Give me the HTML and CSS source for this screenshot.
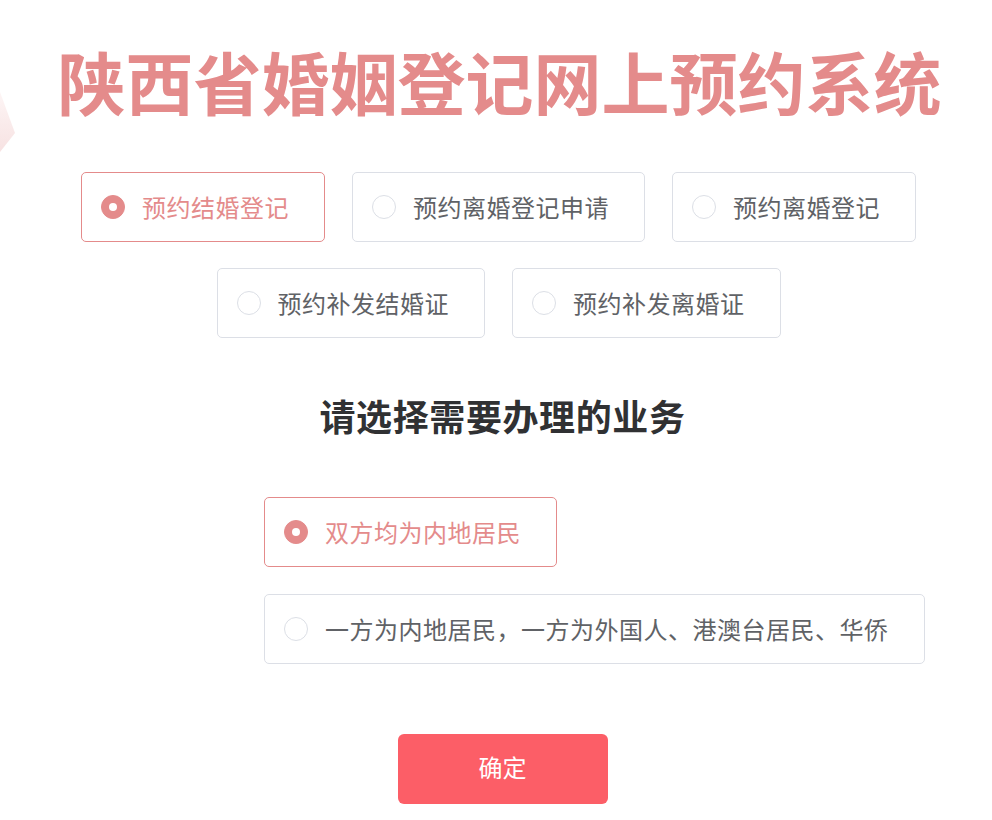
FILE: index.html
```html
<!DOCTYPE html>
<html lang="zh-CN">
<head>
<meta charset="utf-8">
<title>陕西省婚姻登记网上预约系统</title>
<link rel="stylesheet" href="styles.css">
</head>
<body>
<svg class="deco" width="40" height="200" viewBox="0 0 40 200" aria-hidden="true">
  <defs>
    <linearGradient id="dg" x1="0" y1="0" x2="0" y2="1">
      <stop offset="0" stop-color="#fdf5f5"/>
      <stop offset="1" stop-color="#f7e2e2"/>
    </linearGradient>
  </defs>
  <polygon points="0,92 15,133 0,152" fill="url(#dg)"/>
</svg>
<main class="page">
  <h1 class="title">陕西省婚姻登记网上预约系统</h1>

  <div class="options">
    <div class="row">
      <label class="opt is-checked"><span class="radio"></span><span class="txt">预约结婚登记</span></label>
      <label class="opt"><span class="radio"></span><span class="txt">预约离婚登记申请</span></label>
      <label class="opt"><span class="radio"></span><span class="txt">预约离婚登记</span></label>
    </div>
    <div class="row">
      <label class="opt"><span class="radio"></span><span class="txt">预约补发结婚证</span></label>
      <label class="opt"><span class="radio"></span><span class="txt">预约补发离婚证</span></label>
    </div>
  </div>

  <h2 class="subtitle">请选择需要办理的业务</h2>

  <div class="biz">
    <label class="opt is-checked"><span class="radio"></span><span class="txt">双方均为内地居民</span></label>
    <label class="opt"><span class="radio"></span><span class="txt">一方为内地居民，一方为外国人、港澳台居民、华侨</span></label>
  </div>

  <div class="actions">
    <button class="btn" type="button">确定</button>
  </div>
</main>
</body>
</html>
```
FILE: styles.css
```css
* { box-sizing: border-box; }
html, body { margin: 0; padding: 0; background: #fff; }
body {
  font-family: "Noto Sans CJK SC", "Noto Sans", sans-serif;
  color: #606266;
  position: relative;
  width: 992px;
  height: 820px;
  overflow: hidden;
}
.deco { position: absolute; left: 0; top: 0; }
.page {
  display: flex;
  flex-direction: column;
  align-items: center;
  padding-left: 5px;
  padding-top: 33px;
}
.title {
  margin: 0 0 0 2px;
  font-size: 68px;
  line-height: 96px;
  font-weight: 700;
  color: #e48b8b;
  letter-spacing: 0;
  white-space: nowrap;
}
.options {
  margin-top: 43px;
  display: flex;
  flex-direction: column;
  align-items: center;
  gap: 26px;
}
.row { display: flex; gap: 27px; }
.opt {
  display: flex;
  align-items: center;
  height: 70px;
  padding: 0 35px 0 19px;
  border: 1px solid #dcdfe6;
  border-radius: 5px;
  background: #fff;
  cursor: pointer;
  white-space: nowrap;
}
.radio {
  width: 24px;
  height: 24px;
  border: 1px solid #dcdfe6;
  border-radius: 50%;
  margin-right: 17px;
  flex: none;
  position: relative;
  background: #fff;
}
.txt {
  font-size: 24px;
  line-height: 32px;
  letter-spacing: 0.5px;
  color: #606266;
}
.opt.is-checked { border-color: #e48b8b; }
.opt.is-checked .radio { background: #e48b8b; border-color: #e48b8b; }
.opt.is-checked .radio::after {
  content: "";
  position: absolute;
  left: 50%; top: 50%;
  width: 8px; height: 8px;
  margin: -4px 0 0 -4px;
  border-radius: 50%;
  background: #fff;
}
.opt.is-checked .txt { color: #e48b8b; }
.subtitle {
  margin: 53px 0 0 8px;
  font-size: 36px;
  line-height: 48px;
  font-weight: 700;
  color: #303133;
  letter-spacing: 0.6px;
}
.biz {
  align-self: flex-start;
  margin-left: 259px;
  margin-top: 58px;
  display: flex;
  flex-direction: column;
  align-items: flex-start;
  gap: 27px;
}
.actions { margin-top: 70px; margin-left: 8px; }
.btn {
  width: 210px;
  height: 70px;
  padding: 0 0 5px;
  border: 0;
  border-radius: 6px;
  background: #fc5e67;
  color: #fff;
  font-family: inherit;
  font-size: 24px;
  cursor: pointer;
}
```
